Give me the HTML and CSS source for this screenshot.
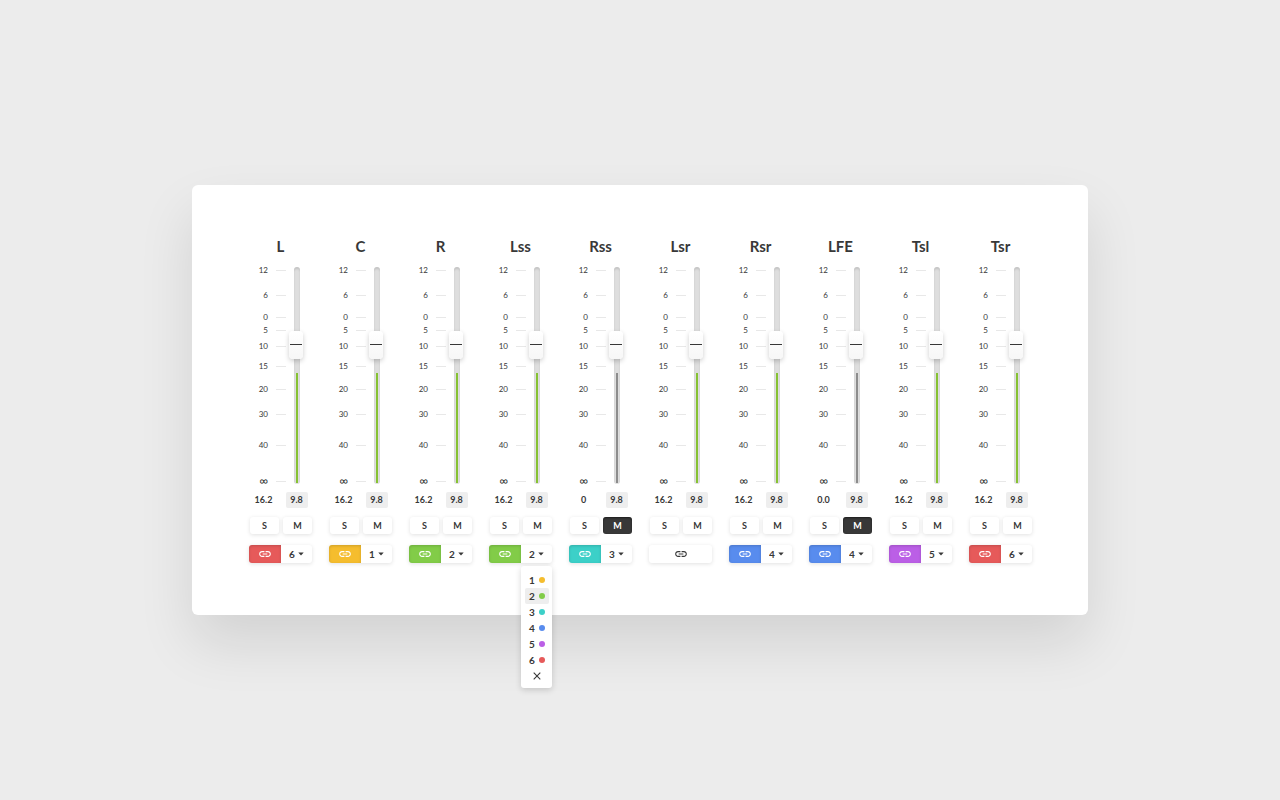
FILE: index.html
```html
<!DOCTYPE html>
<html lang="en">
<head>
<meta charset="utf-8">
<title>Channel mixer</title>
<link rel="stylesheet" href="styles.css">
</head>
<body>
<svg class="sprite" aria-hidden="true">
  <symbol id="link" viewBox="0 0 24 24"><path fill="currentColor" d="M3.9 12c0-1.71 1.39-3.1 3.1-3.1h4V7H7c-2.76 0-5 2.24-5 5s2.24 5 5 5h4v-1.900H7c-1.710 0-3.100-1.390-3.100-3.100zM8 13h8v-2H8v2zm9-6h-4v1.900h4c1.710 0 3.100 1.390 3.100 3.100s-1.390 3.100-3.100 3.100h-4V17h4c2.760 0 5-2.240 5-5s-2.240-5-5-5z"/></symbol>
  <symbol id="caret" viewBox="0 0 6 4"><path fill="currentColor" d="M.3.5h5.400L3 3.500z"/></symbol>
  <symbol id="cross" viewBox="0 0 8 8"><path fill="none" stroke="currentColor" stroke-width="1.100" d="M.7.7l6.600 6.600M7.300.7L.7 7.300"/></symbol>
</svg>
<main class="mixer" id="mixer"></main>
<script src="mixer.js"></script>
</body>
</html>
```
FILE: styles.css
```css
* {
  box-sizing: border-box;
}

body {
  margin: 0;
  min-height: 100vh;
  display: flex;
  align-items: center;
  justify-content: center;
  background: #ececec;
  color: #383838;
  font-family: Lato, "Open Sans", sans-serif;
}

button, select, input {
  margin: 0;
  padding: 0;
  border: 0;
  font: inherit;
  color: inherit;
}

.sprite {
  position: absolute;
  width: 0;
  height: 0;
}

.mixer {
  width: 70%;
  min-width: 840px;
  display: flex;
  justify-content: center;
  gap: 17px;
  padding: 51px 0 52px 1px;
  background: #fff;
  border-radius: 6px;
  box-shadow: 0 28px 56px rgba(0, 0, 0, 0.11);
}

.channel {
  width: 63px;
}

.name {
  margin: 0;
  font-size: 15px;
  line-height: 20px;
  font-weight: 700;
  text-align: center;
}

.level {
  display: flex;
  align-items: flex-start;
  margin-top: 9px;
}

.scale {
  width: 37px;
  margin: 0;
  padding: 0;
  list-style: none;
  font-size: 8px;
  line-height: 10px;
}

.scale li {
  display: flex;
  align-items: center;
  gap: 8px;
  height: 10px;
}

.scale li::after {
  content: "";
  width: 10px;
  height: 1px;
  background: #e8e8e8;
}

.scale span {
  width: 19px;
  text-align: right;
}

.scale li:nth-child(2) { margin-top: 15px; }
.scale li:nth-child(3) { margin-top: 12px; }
.scale li:nth-child(4) { margin-top: 3px; }
.scale li:nth-child(5) { margin-top: 6px; }
.scale li:nth-child(6) { margin-top: 10px; }
.scale li:nth-child(7) { margin-top: 13px; }
.scale li:nth-child(8) { margin-top: 15px; }
.scale li:nth-child(9) { margin-top: 21px; }
.scale li:nth-child(10) { margin-top: 26px; font-size: 12px; }

.fader {
  display: grid;
  width: 14px;
  height: 217px;
  margin: 2px 0 0 3px;
}

.track, .slider {
  grid-area: 1 / 1;
}

.track {
  display: flex;
  align-items: flex-end;
  width: 6px;
  margin-left: 5px;
  padding: 0 2px 1px;
  border-radius: 3px;
  background: #dedede;
  box-shadow: inset 0 2px 2px rgba(0, 0, 0, 0.12);
}

.meter {
  width: 2px;
  background: #86c232;
}

.muted .meter {
  background: #8c8c8c;
}

.slider {
  appearance: none;
  writing-mode: vertical-lr;
  direction: rtl;
  width: 14px;
  height: 217px;
  background: transparent;
}

.slider::-webkit-slider-thumb {
  appearance: none;
  width: 14px;
  height: 28px;
  border-radius: 4px;
  background:
    linear-gradient(#383838, #383838) center 13px / 12px 1px no-repeat,
    linear-gradient(#fff, #f7f7f7);
  box-shadow: 0 2px 5px rgba(0, 0, 0, 0.2);
}

.readout, .switches {
  display: grid;
  grid-template-columns: 29px 29px;
  gap: 4px;
  justify-items: center;
  font-size: 9px;
  line-height: 16px;
  font-weight: 700;
}

.readout {
  margin-top: 6px;
}

.readout .peak {
  width: 22px;
  border-radius: 2px;
  background: #eee;
  text-align: center;
}

.switches {
  margin-top: 9px;
  padding-left: 1px;
}

.switches button {
  width: 29px;
  height: 17px;
  border-radius: 3px;
  background: #fff;
  box-shadow: 0 1px 4px rgba(0, 0, 0, 0.12);
}

.switches button[aria-pressed="true"] {
  background: #383838;
  color: #fff;
  box-shadow: inset 0 1px 2px rgba(0, 0, 0, 0.5);
}

.group {
  position: relative;
  display: flex;
  height: 18px;
  margin-top: 11px;
  border-radius: 3px;
  background: #fff;
  box-shadow: 0 1px 4px rgba(0, 0, 0, 0.12);
}

.link {
  flex: 1;
  display: flex;
  align-items: center;
  justify-content: center;
  border-radius: 3px;
  background: transparent;
}

.link svg {
  width: 14px;
  height: 14px;
}

.linked .link {
  border-radius: 3px 0 0 3px;
  box-shadow: inset 0 1px 3px rgba(0, 0, 0, 0.16);
  color: #fff;
}

.picker {
  display: grid;
  width: 31px;
  align-items: center;
}

.picker select {
  grid-area: 1 / 1;
  appearance: none;
  width: 31px;
  height: 18px;
  padding-left: 8px;
  background: transparent;
  font-size: 10px;
  line-height: 18px;
  font-weight: 700;
}

.picker svg {
  grid-area: 1 / 1;
  justify-self: end;
  width: 6px;
  height: 4px;
  margin-right: 8px;
  pointer-events: none;
}

.color-1 { background: #f5bd2e; }
.color-2 { background: #82cc48; }
.color-3 { background: #3cd0c8; }
.color-4 { background: #588cee; }
.color-5 { background: #bb5fe6; }
.color-6 { background: #e65a5a; }

.menu {
  position: absolute;
  top: 21px;
  right: 0;
  width: 31px;
  padding: 6px 3px 4px 4px;
  border-radius: 3px;
  background: #fff;
  box-shadow: 0 2px 6px rgba(0, 0, 0, 0.16);
}

.menu button {
  display: flex;
  align-items: center;
  justify-content: center;
  gap: 4px;
  width: 24px;
  height: 16px;
  border-radius: 2px;
  background: transparent;
  font-size: 10px;
  line-height: 16px;
  font-weight: 700;
}

.menu button[aria-checked="true"] {
  background: #eee;
}

.menu i {
  width: 6px;
  height: 6px;
  border-radius: 50%;
}

.menu svg {
  width: 8px;
  height: 8px;
}
```
FILE: mixer.js
```js
const marks = ["12", "6", "0", "5", "10", "15", "20", "30", "40", "∞"];
const groups = [1, 2, 3, 4, 5, 6];

const channels = [
  { name: "L", gain: "16.2", group: 6 },
  { name: "C", gain: "16.2", group: 1 },
  { name: "R", gain: "16.2", group: 2 },
  { name: "Lss", gain: "16.2", group: 2, open: true },
  { name: "Rss", gain: "0", group: 3, muted: true },
  { name: "Lsr", gain: "16.2" },
  { name: "Rsr", gain: "16.2", group: 4 },
  { name: "LFE", gain: "0.0", group: 4, muted: true },
  { name: "Tsl", gain: "16.2", group: 5 },
  { name: "Tsr", gain: "16.2", group: 6 },
];

const icon = (id) => `<svg aria-hidden="true"><use href="#${id}"/></svg>`;

const picker = (c) => `
  <div class="picker">
    <select aria-label="${c.name} group">
      ${groups.map((g) => `<option${g === c.group ? " selected" : ""}>${g}</option>`).join("")}
    </select>
    ${icon("caret")}
  </div>`;

const menu = (c) => `
  <div class="menu" role="menu">
    ${groups.map((g) => `<button type="button" role="menuitemradio" aria-checked="${g === c.group}">${g}<i class="color-${g}"></i></button>`).join("")}
    <button type="button" role="menuitem" aria-label="Unlink">${icon("cross")}</button>
  </div>`;

const channel = (c) => `
  <section class="channel${c.muted ? " muted" : ""}">
    <h2 class="name">${c.name}</h2>
    <div class="level">
      <ul class="scale">${marks.map((m) => `<li><span>${m}</span></li>`).join("")}</ul>
      <div class="fader">
        <div class="track"><div class="meter" style="height: 51%"></div></div>
        <input class="slider" type="range" min="0" max="100" value="66" aria-label="${c.name} level">
      </div>
    </div>
    <div class="readout"><span>${c.gain}</span><span class="peak">9.8</span></div>
    <div class="switches">
      <button type="button" aria-label="Solo ${c.name}">S</button>
      <button type="button" aria-label="Mute ${c.name}" aria-pressed="${Boolean(c.muted)}">M</button>
    </div>
    <div class="group${c.group ? " linked" : ""}">
      <button type="button" class="link${c.group ? ` color-${c.group}` : ""}" aria-label="Link ${c.name}">${icon("link")}</button>
      ${c.group ? picker(c) : ""}
      ${c.open ? menu(c) : ""}
    </div>
  </section>`;

document.getElementById("mixer").innerHTML = channels.map(channel).join("");
```
